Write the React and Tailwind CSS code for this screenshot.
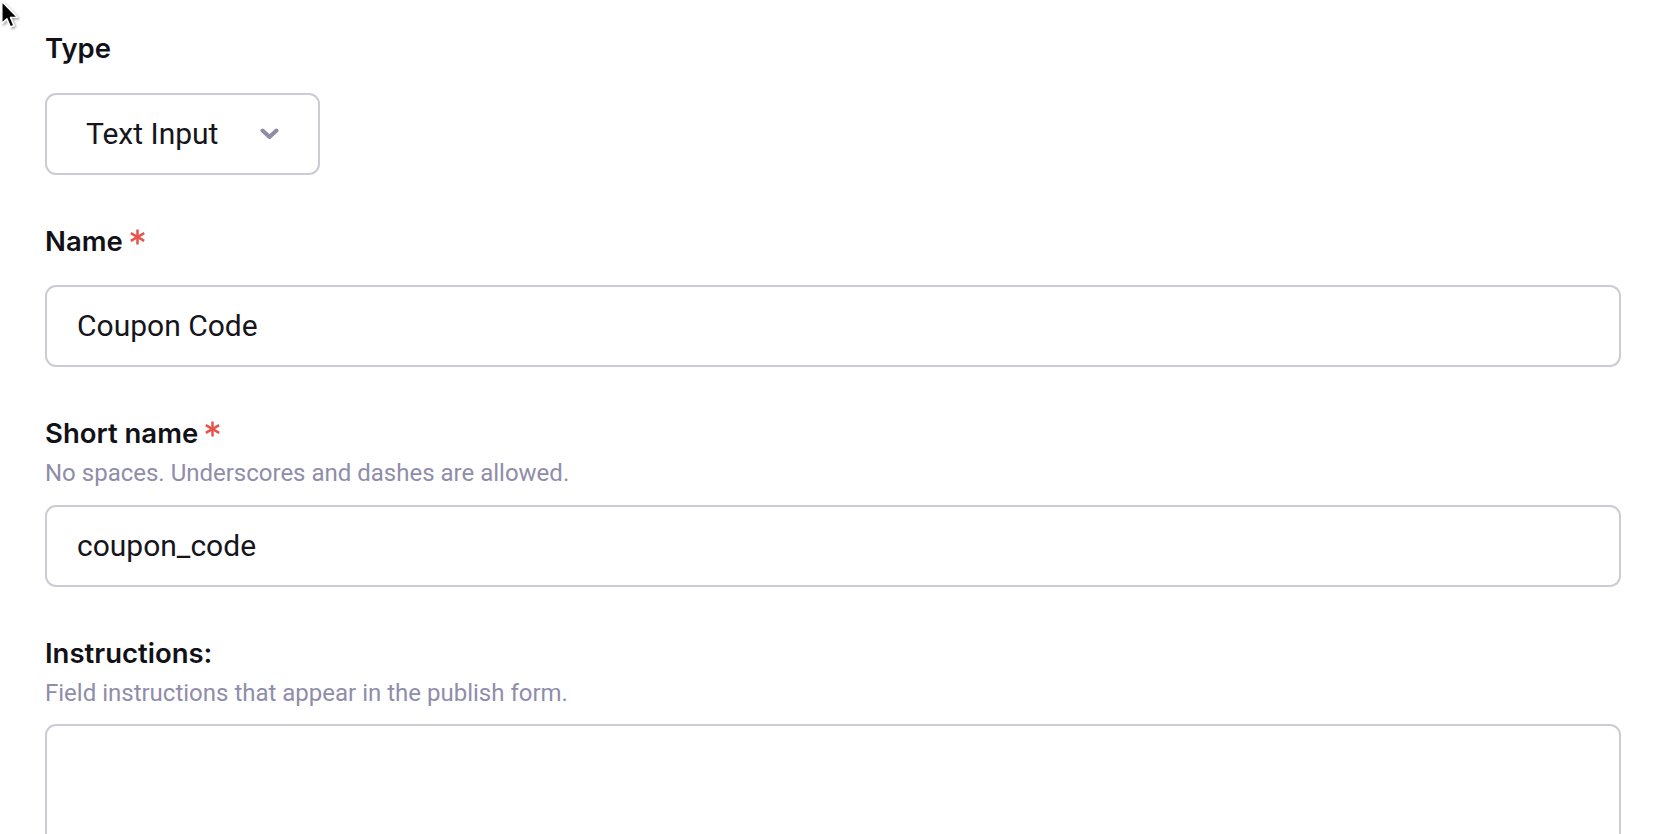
import React from "react";

const font = { fontFamily: "Roboto, 'Noto Sans', Arial, sans-serif" };
const labelFont = { fontFamily: "Inter, Roboto, 'Noto Sans', Arial, sans-serif" };

function Asterisk() {
  return (
    <svg width="17" height="16" viewBox="0 0 17 16" className="ml-[6px] mb-[8px] shrink-0" aria-hidden="true">
      <g stroke="#e5534b" strokeWidth="2.5" strokeLinecap="butt">
        <line x1="8.5" y1="0.5" x2="8.5" y2="15.5" />
        <line x1="1.8" y1="4.1" x2="15.2" y2="11.9" />
        <line x1="1.8" y1="11.9" x2="15.2" y2="4.1" />
      </g>
    </svg>
  );
}

function Label({ children, required }) {
  return (
    <div className="flex items-center text-[27.5px] leading-[36px] font-semibold text-[#111117]" style={labelFont}>
      <span>{children}</span>
      {required && <Asterisk />}
    </div>
  );
}

function Help({ children }) {
  return <div className="mt-[6px] text-[24px] leading-[32px] text-[#8f8daa]">{children}</div>;
}

function Chevron() {
  return (
    <svg width="19" height="12" viewBox="0 0 19 12" aria-hidden="true">
      <polyline
        points="2.5,2.5 9.5,9 16.5,2.5"
        fill="none"
        stroke="#8e8ca6"
        strokeWidth="4"
        strokeLinecap="round"
        strokeLinejoin="round"
      />
    </svg>
  );
}

function Cursor() {
  return (
    <svg
      className="absolute left-0 top-0"
      width="26"
      height="34"
      viewBox="0 0 24 32"
      aria-hidden="true"
    >
      <defs>
        <filter id="sh" x="-50%" y="-50%" width="200%" height="200%">
          <feDropShadow dx="1.5" dy="1.5" stdDeviation="1.2" floodColor="#000" floodOpacity="0.35" />
        </filter>
      </defs>
      <path
        d="M1.5 1.5 L1.5 22 L6.3 17.6 L9.6 25.4 L12.8 24 L9.6 16.4 L16 16.2 Z"
        fill="#000"
        stroke="#fff"
        strokeWidth="1.3"
        strokeLinejoin="round"
        filter="url(#sh)"
      />
    </svg>
  );
}

export default function App() {
  return (
    <div className="relative h-[834px] w-full overflow-hidden bg-white" style={font}>
      <Cursor />
      <div className="flex flex-col gap-[48px] px-[45px] pt-[30px]">
        <div className="flex flex-col items-start">
          <Label>Type</Label>
          <div className="mt-[27px] inline-flex h-[82px] items-center gap-[42px] rounded-[11px] border-2 border-[#cccbd6] bg-white px-[39px]">
            <span className="text-[30px] leading-none text-[#15151b]">Text Input</span>
            <Chevron />
          </div>
        </div>

        <div className="flex flex-col">
          <Label required>Name</Label>
          <div className="mt-[26px] flex h-[82px] items-center rounded-[11px] border-2 border-[#cccbd6] bg-white px-[30px]">
            <span className="text-[30px] leading-none text-[#15151b]">Coupon Code</span>
          </div>
        </div>

        <div className="flex flex-col">
          <Label required>Short name</Label>
          <Help>No spaces. Underscores and dashes are allowed.</Help>
          <div className="mt-[16px] flex h-[82px] items-center rounded-[11px] border-2 border-[#cccbd6] bg-white px-[30px]">
            <span className="text-[30px] leading-none text-[#15151b]">coupon_code</span>
          </div>
        </div>

        <div className="flex flex-col">
          <Label>Instructions:</Label>
          <Help>Field instructions that appear in the publish form.</Help>
          <div className="mt-[15px] h-[200px] rounded-[11px] border-2 border-[#cccbd6] bg-white" />
        </div>
      </div>
    </div>
  );
}
